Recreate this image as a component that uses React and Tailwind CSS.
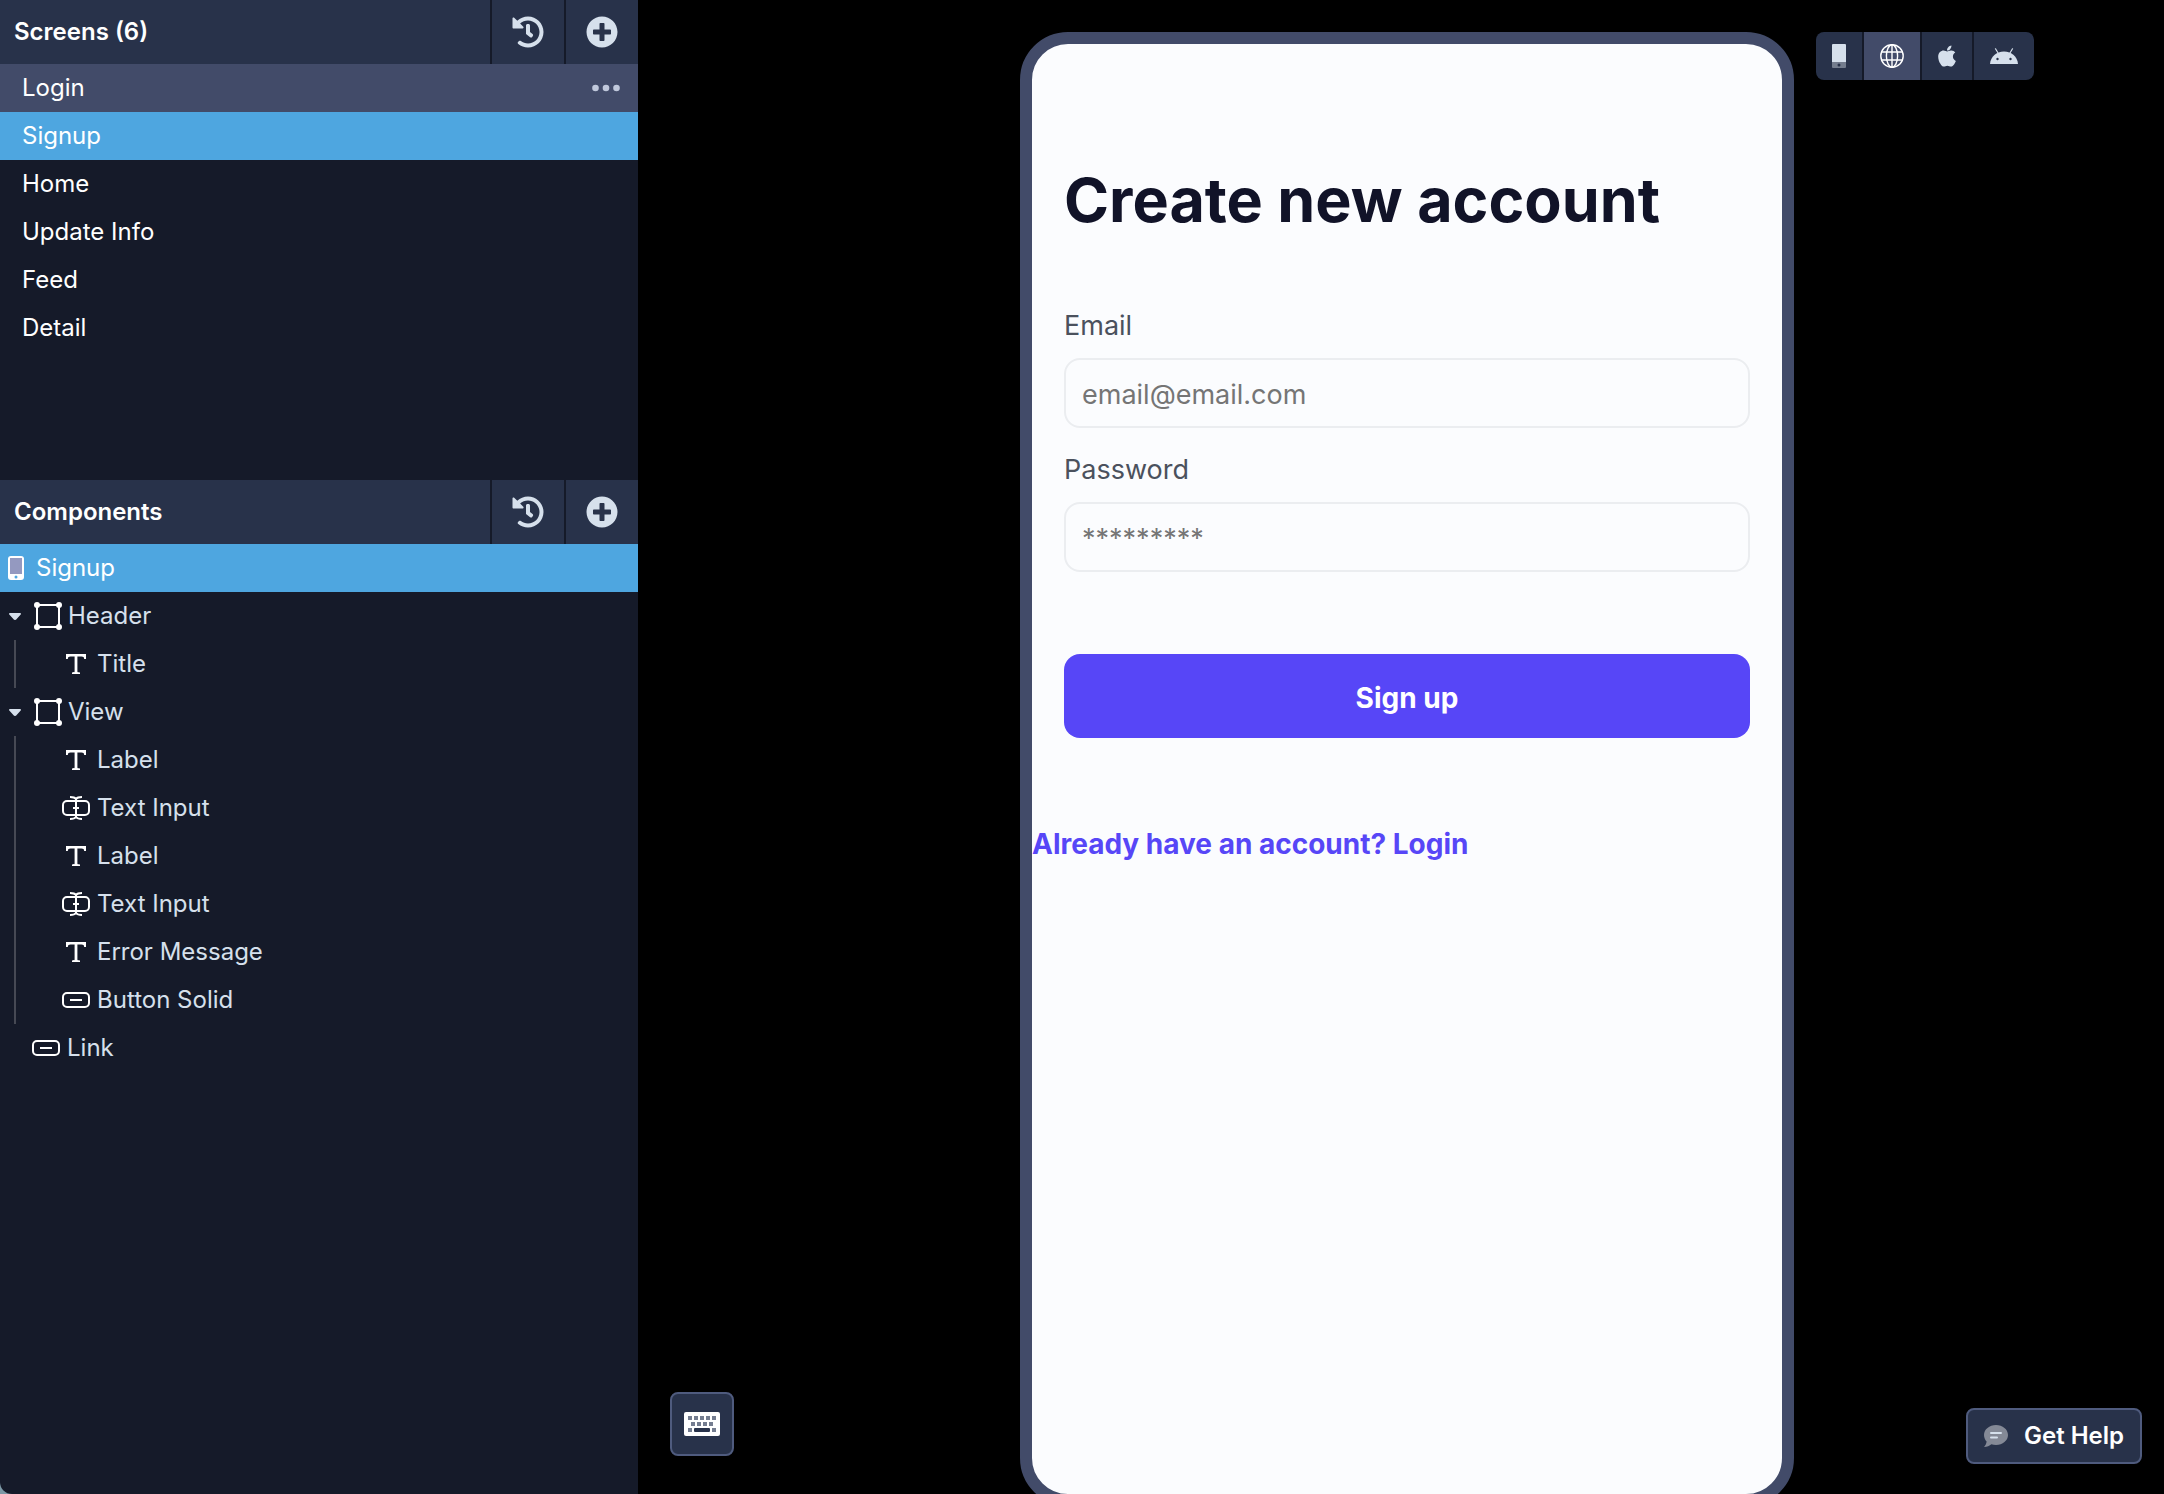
import React, { useState } from 'react';
import { FaHistory, FaPlusCircle, FaApple } from 'react-icons/fa';

const SCREENS = ['Login', 'Signup', 'Home', 'Update Info', 'Feed', 'Detail'];

const TREE = [
  { name: 'Header', icon: 'view', children: [{ name: 'Title', icon: 'text' }] },
  {
    name: 'View',
    icon: 'view',
    children: [
      { name: 'Label', icon: 'text' },
      { name: 'Text Input', icon: 'input' },
      { name: 'Label', icon: 'text' },
      { name: 'Text Input', icon: 'input' },
      { name: 'Error Message', icon: 'text' },
      { name: 'Button Solid', icon: 'button' },
    ],
  },
  { name: 'Link', icon: 'button' },
];

const ViewIcon = () => (
  <svg viewBox="0 0 28 28" className="size-7" fill="none" stroke="white" strokeWidth="2">
    <path d="M3 3h22v22H3z" />
    <g fill="white" stroke="none">
      <circle cx="3" cy="3" r="3" />
      <circle cx="25" cy="3" r="3" />
      <circle cx="3" cy="25" r="3" />
      <circle cx="25" cy="25" r="3" />
    </g>
  </svg>
);

const TextIcon = () => (
  <svg viewBox="0 0 28 28" className="size-7" fill="white">
    <path d="M4 4h20v5h-1.800c-.2-1.700-.9-2.400-2.700-2.400H15.400V21.500c0 .7.500.9 2.600.9V24h-8v-1.600c2.100 0 2.600-.2 2.600-.9V6.600H8.500c-1.800 0-2.500.7-2.700 2.400H4z" />
  </svg>
);

const InputIcon = () => (
  <svg viewBox="0 0 28 28" className="size-7" fill="none" stroke="white" strokeWidth="2">
    <rect x="1" y="7" width="26" height="14" rx="4" />
    <path d="M14 4v20M11 14h6M8 3c3 0 5 .6 6 2 1-1.400 3-2 6-2M8 25c3 0 5-.6 6-2 1 1.400 3 2 6 2" />
  </svg>
);

const ButtonIcon = () => (
  <svg viewBox="0 0 28 28" className="size-7" fill="none" stroke="white" strokeWidth="2">
    <rect x="1" y="7" width="26" height="14" rx="4" />
    <path d="M8 14h12" />
  </svg>
);

const ICONS = { view: ViewIcon, text: TextIcon, input: InputIcon, button: ButtonIcon };

const DotsIcon = () => (
  <svg viewBox="0 0 28 8" className="h-2 w-7" fill="currentColor">
    <circle cx="3.500" cy="4" r="3.300" />
    <circle cx="14" cy="4" r="3.300" />
    <circle cx="24.500" cy="4" r="3.300" />
  </svg>
);

const PhoneIcon = () => (
  <svg viewBox="0 0 16 24" className="h-6 w-4">
    <rect width="16" height="24" rx="3" fill="white" />
    <path d="M2 2h12v16H2z" fill="#9499c0" />
    <circle cx="8" cy="21" r="1.500" fill="#4ea6e0" />
  </svg>
);

const DeviceIcon = () => (
  <svg viewBox="0 0 14 24" className="h-6 w-[14px]">
    <path d="M1 0h12a1 1 0 0 1 1 1v17H0V1a1 1 0 0 1 1-1z" fill="#d6e0ec" />
    <path d="M0 18h14v5a1 1 0 0 1-1 1H1a1 1 0 0 1-1-1z" fill="#747d8e" />
    <circle cx="7" cy="21" r="1.500" fill="#28324a" />
  </svg>
);

const GlobeIcon = () => (
  <svg viewBox="0 0 24 24" className="size-6" fill="none" stroke="white" strokeWidth="1.400">
    <circle cx="12" cy="12" r="11.200" />
    <ellipse cx="12" cy="12" rx="5.600" ry="11.200" />
    <path d="M12 1v22M2 8h20M2 16h20" />
  </svg>
);

const AndroidIcon = () => (
  <svg viewBox="0 0 28 16" className="h-4 w-7">
    <path d="M5.500.8l3 5M22.500.8l-3 5" stroke="#d6e0ec" strokeWidth="1.200" strokeLinecap="round" />
    <path d="M0 16C.6 8.800 6.400 3.600 14 3.600S27.400 8.800 28 16z" fill="#d6e0ec" />
    <circle cx="7.500" cy="11" r="1.200" fill="#28324a" />
    <circle cx="20.500" cy="11" r="1.200" fill="#28324a" />
  </svg>
);

const KeyboardIcon = () => (
  <svg viewBox="0 0 36 24" className="h-6 w-9">
    <rect width="36" height="24" rx="2" fill="white" />
    <path
      fill="#747d90"
      d="M4 4h4v4H4zM10 4h4v4h-4zM16 4h4v4h-4zM22 4h4v4h-4zM28 4h4v4h-4zM7 10h4v4H7zM13 10h4v4h-4zM19 10h4v4h-4zM25 10h4v4h-4zM4 16h4v4H4zM28 16h4v4h-4z"
    />
    <rect x="10" y="16" width="16" height="4" rx="1" fill="#28324a" />
  </svg>
);

const ChatIcon = () => (
  <svg viewBox="0 0 24 22" className="h-[22px] w-6">
    <path d="M12 0c6.600 0 12 4.400 12 10s-5.400 10-12 10c-1.600 0-3.200-.2-4.600-.8C5.600 20.600 3 22 0 22c1.400-1.400 2.400-3.400 2.600-5.400C1 14.800 0 12.600 0 10 0 4.400 5.400 0 12 0z" fill="#848996" />
    <path d="M7 8h10M7 12.500h6" stroke="#d6e0ec" strokeWidth="2" strokeLinecap="round" />
  </svg>
);

const PanelHeader = ({ title }) => (
  <header className="flex h-16 bg-[#28324a] text-[#d6e0ec]">
    <h2 className="flex flex-1 items-center pl-[14px] text-2xl font-semibold text-white">{title}</h2>
    <button aria-label={`${title} history`} className="flex w-[74px] items-center justify-center border-l-2 border-[#151a29]">
      <FaHistory className="size-8" />
    </button>
    <button aria-label={`Add to ${title}`} className="flex w-[74px] items-center justify-center border-l-2 border-[#151a29]">
      <FaPlusCircle className="size-8" />
    </button>
  </header>
);

const TreeNode = ({ node, nested }) => {
  const [open, setOpen] = useState(true);
  const Icon = ICONS[node.icon];
  const indent = nested ? 'pl-[46px]' : 'pl-8';

  if (!node.children) {
    return (
      <li className={`flex h-12 items-center gap-[7px] ${indent}`}>
        <Icon />
        {node.name}
      </li>
    );
  }

  return (
    <li>
      <div className="flex h-12 items-center pl-[9px]">
        <button aria-label={`Toggle ${node.name}`} onClick={() => setOpen(!open)} className="mr-[13px]">
          <svg viewBox="0 0 12 7" className="h-[7px] w-3" fill="#d6e0ec">
            <path d="M1 0h10c1 0 1.300 1 .7 1.600L7.200 6.500c-.7.700-1.700.7-2.400 0L.3 1.600C-.3 1 0 0 1 0z" />
          </svg>
        </button>
        <Icon />
        <span className="pl-[6px]">{node.name}</span>
      </div>
      {open && (
        <ul className="ml-[14px] border-l-2 border-[#464954]">
          {node.children.map((child, i) => (
            <TreeNode key={i} node={child} nested />
          ))}
        </ul>
      )}
    </li>
  );
};

const Sidebar = ({ selected, onSelect }) => (
  <aside className="flex w-[638px] shrink-0 flex-col rounded-bl-xl bg-[#151a29] text-2xl">
    <section className="h-[480px]">
      <PanelHeader title={`Screens (${SCREENS.length})`} />
      <ul className="text-white">
        {SCREENS.map((name) => (
          <li
            key={name}
            className={`flex h-12 items-center ${
              name === selected ? 'bg-[#4ea6e0]' : name === 'Login' ? 'bg-[#424b69]' : ''
            }`}
          >
            <button className="flex-1 pl-[22px] text-left" onClick={() => onSelect(name)}>
              {name}
            </button>
            {name === 'Login' && (
              <button aria-label="Login options" className="pr-[18px] text-[#c0c8dc]">
                <DotsIcon />
              </button>
            )}
          </li>
        ))}
      </ul>
    </section>
    <section>
      <PanelHeader title="Components" />
      <div className="flex h-12 items-center gap-3 bg-[#4ea6e0] pl-2 text-white">
        <PhoneIcon />
        {selected}
      </div>
      <ul className="text-[#d6e0ec]">
        {TREE.map((node) => (
          <TreeNode key={node.name} node={node} />
        ))}
      </ul>
    </section>
  </aside>
);

const Field = ({ id, label, ...props }) => (
  <div>
    <label htmlFor={id} className="mb-3 block text-[27px] leading-10 text-[#4b515d]">
      {label}
    </label>
    <input
      id={id}
      className="block h-[70px] w-full rounded-2xl border-2 border-[#ebedf0] px-4 pt-[2px] text-[27px] placeholder-[#757575] outline-none"
      {...props}
    />
  </div>
);

const PhonePreview = () => (
  <div className="h-[1474px] w-[774px] shrink-0 rounded-[48px] border-12 border-[#424b69] bg-[#fbfcfe] text-[28px]">
    <form className="px-8" onSubmit={(e) => e.preventDefault()}>
      <h1 className="pt-[116px] pb-[66px] text-[61px] leading-20 font-bold text-[#111328]">Create new account</h1>
      <div className="flex flex-col gap-[22px]">
        <Field id="email" label="Email" type="email" placeholder="email@email.com" />
        <Field id="password" label="Password" type="password" placeholder="*********" />
      </div>
      <button className="mt-[82px] h-[84px] w-full rounded-2xl bg-[#5746f7] pt-1 font-bold text-white">Sign up</button>
    </form>
    <a href="#login" className="mt-[86px] block leading-10 font-bold text-[#5746f7]">
      Already have an account? Login
    </a>
  </div>
);

const PlatformBar = () => (
  <div className="ml-[22px] flex h-12 divide-x-2 divide-[#151a29] overflow-hidden rounded-lg bg-[#28324a] text-[#d6e0ec]">
    <button aria-label="Device" className="px-4">
      <DeviceIcon />
    </button>
    <button aria-label="Web" className="bg-[#424b69] px-4">
      <GlobeIcon />
    </button>
    <button aria-label="iOS" className="px-[13px]">
      <FaApple className="size-6" />
    </button>
    <button aria-label="Android" className="px-4">
      <AndroidIcon />
    </button>
  </div>
);

const App = () => {
  const [selected, setSelected] = useState('Signup');

  return (
    <div className="flex h-screen overflow-hidden bg-[#7d99a6] font-['Inter',sans-serif]">
      <Sidebar selected={selected} onSelect={setSelected} />
      <main className="relative flex flex-1 bg-black pt-8 pl-3">
        <div className="flex-1" />
        <PhonePreview />
        <div className="flex flex-1 items-start">
          <PlatformBar />
        </div>
        <button
          aria-label="Keyboard shortcuts"
          className="absolute bottom-[38px] left-8 flex size-16 items-center justify-center rounded-lg border-2 border-[#4f5b7e] bg-[#28324a]"
        >
          <KeyboardIcon />
        </button>
        <button className="absolute right-[22px] bottom-[30px] flex h-14 items-center gap-4 rounded-lg border-2 border-[#4f5b7e] bg-[#28324a] px-4 text-2xl font-semibold text-white">
          <ChatIcon />
          Get Help
        </button>
      </main>
    </div>
  );
};

export default App;
